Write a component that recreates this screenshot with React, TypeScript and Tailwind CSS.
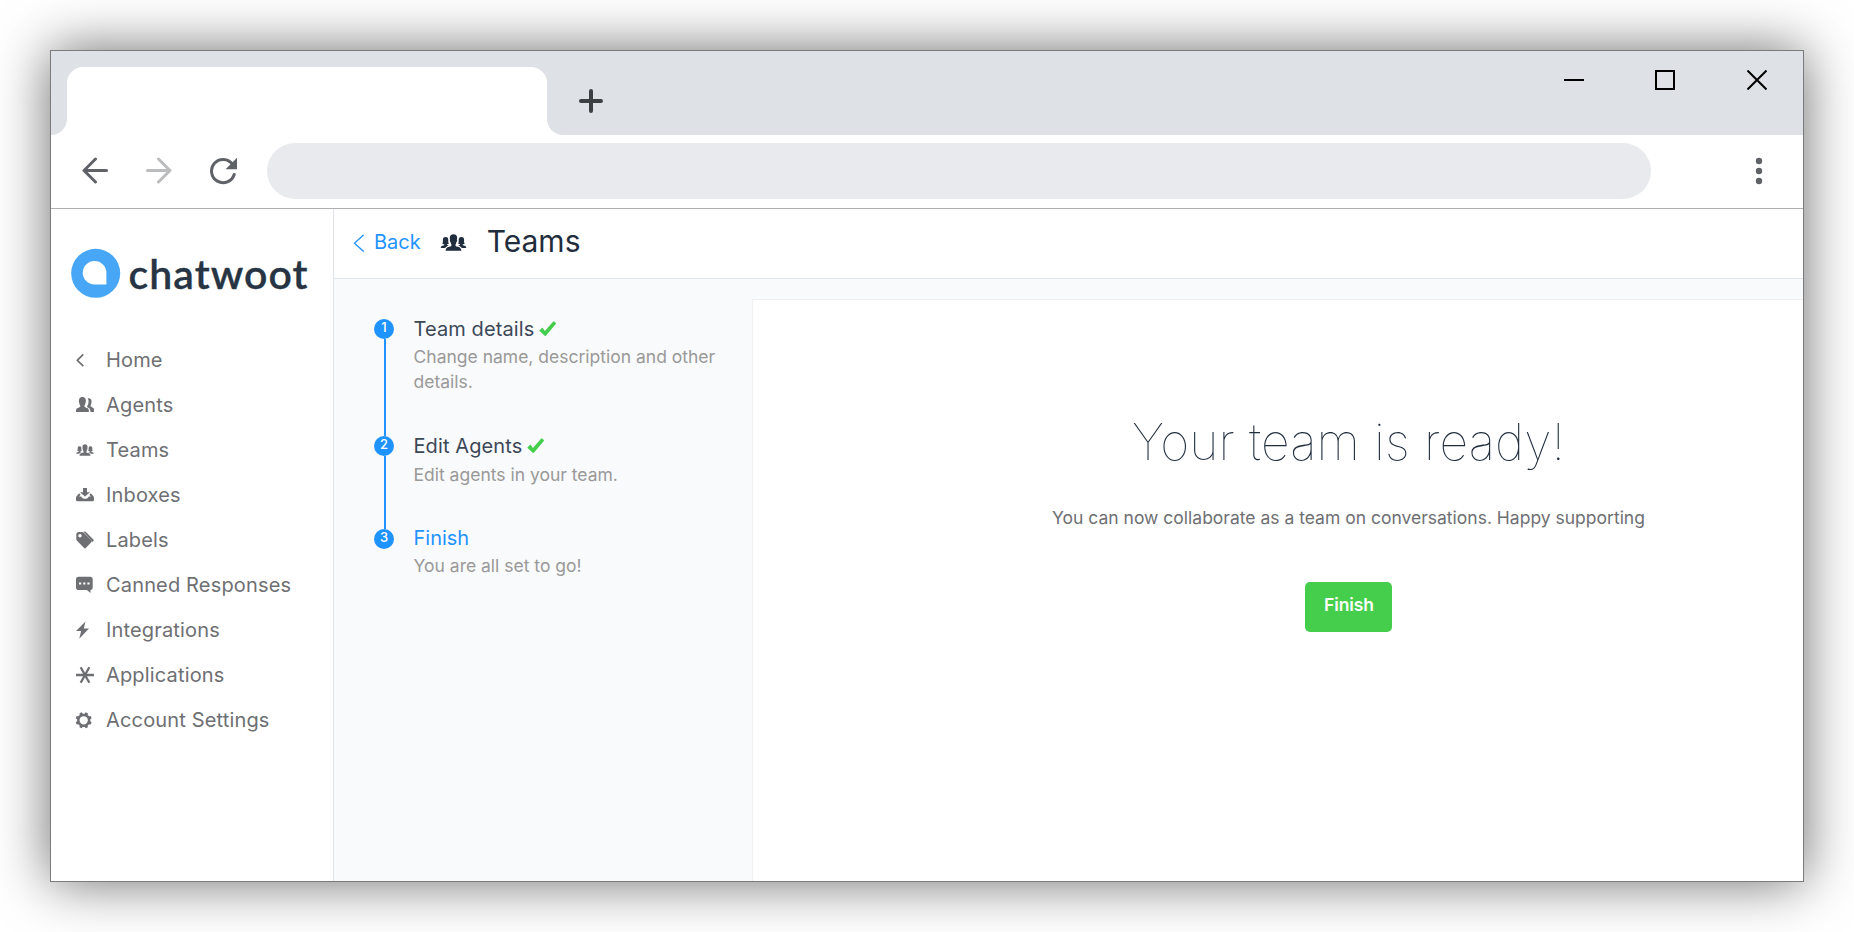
import type { ReactNode } from "react";
import { IoIosPeople } from "react-icons/io";

function NavIcon({ children }: { children: ReactNode }) {
  return (
    <svg className="h-[18px] w-[18px] shrink-0 overflow-visible" viewBox="0 0 18 18" fill="currentColor">
      {children}
    </svg>
  );
}

const Person = () => (
  <NavIcon>
    <path d="M11.7 11.5c-.8-.4-.7-1.3-.2-1.9.6-.8.8-1.6.9-2.5.4-2.1.2-3.6-.8-4.3.6-.5 1.3-.6 2-.4 1.600.3 2.200 1.700 1.900 3.900 0 1-.3 2-.8 2.700-.3.500-.2 1.100.1 1.400.7.7 2.300 1 2.900 2 .3.600.3 1.900.3 3.600h-3.500c-.1-3-.7-3.700-2.800-4.500z" />
    <path d="M0 16c0-2.200.1-3.200 1.100-3.700 1.200-.6 2.800-.8 3.200-1.800.2-.6-.1-1.200-.5-1.800-.5-.9-.7-1.700-.8-2.600C2.600 3.200 3.600 1 6.400 1s3.800 2.200 3.400 5.100c-.1.900-.4 1.800-.9 2.600-.4.600-.7 1.200-.5 1.800.4 1 2 1.200 3.300 1.800 1 .5 1.200 1.500 1.200 3.700z" />
  </NavIcon>
);
const Inbox = () => (
  <NavIcon>
    <path d="M7 2h4v4.200h3L9 10.600 4 6.200h3z" />
    <path d="M3.100 7.300 1 9.800c-.7.800-1 1.400-1 2.300v2c0 .7.500 1.100 1.100 1.100h15.800c.6 0 1.100-.4 1.100-1.100v-2c0-.9-.3-1.500-1-2.300l-2.100-2.500-1.500 1.500 1.500 1.700h-2.100c-.6 1.500-2 2.300-3.800 2.300s-3.200-.8-3.800-2.300H3.100l1.500-1.700z" />
  </NavIcon>
);
const Tags = () => (
  <NavIcon>
    <path
      fillRule="evenodd"
      d="M.3 3.800C.3 2 1.200 1 3 1h3.200c.6 0 1 .2 1.400.6l7.900 7.900c.5.500.5 1.100 0 1.600l-5.700 6c-.5.500-1.200.5-1.700 0L.8 9.400c-.4-.4-.5-.8-.5-1.300zM4 3.100a1.700 1.700 0 1 0 0 3.400 1.700 1.700 0 0 0 0-3.400z"
    />
    <path d="M7.400.6h1.300c.5 0 .9.200 1.200.5l7.700 7.700c.3.300.3.700 0 1l-1.100 1.200-.7-1z" />
  </NavIcon>
);
const Chat = () => (
  <NavIcon>
    <path
      fillRule="evenodd"
      d="M2.600.8h11.500c1.600 0 2.600 1 2.600 2.600v8.100c0 1.500-.9 2.500-2.200 2.600V17l-3.600-2.900H2.600C1 14.100 0 13.100 0 11.500V3.400C0 1.800 1 .8 2.600.8zM3 6.400v2.200h2.200V6.400zm4.200 0v2.200h2.200V6.400zm4.200 0v2.200h2.200V6.400z"
    />
  </NavIcon>
);
const Flash = () => (
  <NavIcon>
    <path d="M9.500.6 0 10h5.200L3.200 17.700 13 7.500H7.800z" />
  </NavIcon>
);
const Asterisk = () => (
  <NavIcon>
    <path d="M0 9h18M4.700 1.200l8.600 15.600M13.300 1.200 4.700 16.800" stroke="currentColor" strokeWidth="2.300" />
  </NavIcon>
);
const Gear = () => (
  <NavIcon>
    <g transform="translate(7.700 9.300)">
      <circle r="5.400" fill="none" stroke="currentColor" strokeWidth="2.500" />
      {[22.5, 67.5, 112.5, 157.5, 202.5, 247.5, 292.5, 337.5].map((a) => (
        <path key={a} d="M-1.800-5.700-1.200-8.100h2.400l.6 2.400z" transform={`rotate(${a})`} />
      ))}
    </g>
  </NavIcon>
);
const Chevron = () => (
  <NavIcon>
    <path d="M7.300 3.400 1.300 9.300l6 5.900" fill="none" stroke="currentColor" strokeWidth="1.700" />
  </NavIcon>
);
const TeamsSmall = () => (
  <span className="flex h-[18px] w-[18px] shrink-0 items-center justify-center">
    <IoIosPeople className="size-[20px] shrink-0" />
  </span>
);

const nav = [
  { label: "Home", icon: <Chevron /> },
  { label: "Agents", icon: <Person /> },
  { label: "Teams", icon: <TeamsSmall /> },
  { label: "Inboxes", icon: <Inbox /> },
  { label: "Labels", icon: <Tags /> },
  { label: "Canned Responses", icon: <Chat /> },
  { label: "Integrations", icon: <Flash /> },
  { label: "Applications", icon: <Asterisk /> },
  { label: "Account Settings", icon: <Gear /> },
];

const Check = () => (
  <svg className="mt-[2px] ml-[5px] h-[16px] w-[18px]" viewBox="0 0 18 16" fill="#44ce4b">
    <path d="m.6 9.200 2.300-2.300c.3-.3.600-.2.800.1l2.200 3L14.200.6c.3-.3.600-.3.900 0l1.700 1.500c.3.300.3.500 0 .9L6.900 14.800c-.4.400-.8.400-1.200 0L.6 10c-.3-.3-.3-.5 0-.8z" />
  </svg>
);

const steps = [
  { title: "Team details", body: "Change name, description and other details.", done: true, box: "h-[117px]", titleBox: "", bodyGap: "mt-[5px]" },
  { title: "Edit Agents", body: "Edit agents in your team.", done: true, box: "h-[93px]", titleBox: "", bodyGap: "mt-[6px]" },
  { title: "Finish", body: "You are all set to go!", done: false, box: "h-[93px]", titleBox: "-mt-px", bodyGap: "mt-[5px]" },
];

function TabStrip() {
  return (
    <div className="flex h-[84px] shrink-0 bg-[#dee1e6]">
      <div className="flex w-[16px] items-end bg-white">
        <div className="h-full w-full rounded-br-[16px] bg-[#dee1e6]" />
      </div>
      <div className="mt-[16px] w-[480px] rounded-t-[16px] bg-white" />
      <div className="flex flex-1 bg-white">
        <div className="flex flex-1 justify-between rounded-bl-[16px] bg-[#dee1e6] pt-[19px] pr-[36px] pl-[32px]">
          <svg className="mt-[19px] h-[24px] w-[24px]" viewBox="0 0 24 24" stroke="#3c4043" strokeWidth="4" strokeLinecap="round">
            <path d="M12 2v20M2 12h20" />
          </svg>
          <div className="flex">
            <svg className="mr-[71px] h-[20px] w-[20px]" viewBox="0 0 20 20">
              <path d="M0 9h20v2H0z" />
            </svg>
            <svg className="mr-[72px] h-[20px] w-[20px]" viewBox="0 0 20 20" fill="none" stroke="#000" strokeWidth="2">
              <path d="M1 1h18v18H1z" />
            </svg>
            <svg className="h-[20px] w-[20px]" viewBox="0 0 20 20" stroke="#000" strokeWidth="2">
              <path d="m.5.5 19 19M19.500.5.5 19.500" />
            </svg>
          </div>
        </div>
      </div>
    </div>
  );
}

function Toolbar() {
  return (
    <div className="flex h-[74px] shrink-0 items-center border-b border-[#b0b0b2] bg-white pr-[37px] pb-[1px] pl-[30px]">
      <svg className="h-[28px] w-[27px] text-[#5f6368]" viewBox="0 0 27 28" fill="none" stroke="currentColor" strokeWidth="3" strokeLinecap="round" strokeLinejoin="round">
        <path d="M25.500 13.500H3M14.500 2 3 13.500 14.500 25" />
      </svg>
      <svg className="ml-[37px] h-[28px] w-[27px] text-[#babcbe]" viewBox="0 0 27 28" fill="none" stroke="currentColor" strokeWidth="3" strokeLinecap="round" strokeLinejoin="round">
        <path d="M2.500 13.500H25M13.500 2 25 13.500 13.500 25" />
      </svg>
      <svg className="ml-[37px] h-[28px] w-[28px] text-[#5f6368]" viewBox="0 0 28 28">
        <path d="M23.500 7.200A11.600 11.600 0 1 0 25.200 17.500" fill="none" stroke="currentColor" strokeWidth="3" strokeLinecap="round" />
        <path d="M28 .8v11.400H16.600z" fill="currentColor" />
      </svg>
      <div className="ml-[30px] h-[56px] w-[1384px] rounded-full bg-[#e8eaed]" />
      <svg className="ml-auto h-[28px] w-[14px]" viewBox="0 0 14 28" fill="#5f6368">
        <circle cx="7" cy="4" r="3.200" />
        <circle cx="7" cy="14" r="3.200" />
        <circle cx="7" cy="24" r="3.200" />
      </svg>
    </div>
  );
}

export default function App() {
  return (
    <div className="flex h-[932px] w-[1854px] overflow-hidden bg-white p-[50px] font-['Inter',sans-serif]">
      <div className="flex h-[832px] w-[1754px] flex-col border border-[#7b7b7d] bg-white shadow-[0_0_52px_rgba(0,0,0,0.58)]">
        <TabStrip />
        <Toolbar />
        <div className="flex min-h-0 flex-1">
          <aside className="flex w-[283px] shrink-0 flex-col border-r border-[#e0e3ec] bg-white">
            <div className="flex h-[128px] pt-[39px] pl-[20px]">
              <svg className="h-[50px] w-[240px]" viewBox="0 0 240 50">
                <circle cx="24.700" cy="25.300" r="24.500" fill="#47a7f6" />
                <path d="M23.500 13a11.900 11.900 0 0 1 11.900 11.900v11.600H23.500a11.750 11.750 0 0 1 0-23.500z" fill="#fff" />
                <text x="57.500" y="40.500" className="font-['Lato',sans-serif] text-[41px] font-semibold" stroke="#273444" strokeWidth=".3" textLength="179" fill="#273444">
                  chatwoot
                </text>
              </svg>
            </div>
            <nav className="flex flex-col">
              {nav.map((n) => (
                <div key={n.label} className="flex h-[45px] items-center gap-[12px] pl-[25px] text-[20px] tracking-[0.16px] whitespace-nowrap text-[#6e6f73]">
                  {n.icon}
                  <span>{n.label}</span>
                </div>
              ))}
            </nav>
          </aside>
          <main className="flex min-w-0 flex-1 flex-col bg-[#f9fafc]">
            <header className="flex h-[70px] shrink-0 items-center border-b border-[#e0e6ed] bg-white pb-[4px] pl-[19px]">
              <svg className="mt-[3px] h-[18px] w-[12px]" viewBox="0 0 12 18" fill="none" stroke="#1f93ff" strokeWidth="1.300">
                <path d="M10.700.700 1.500 9.200l9.200 8.400" />
              </svg>
              <span className="ml-[9px] text-[20px] text-[#1f93ff]">Back</span>
              <IoIosPeople className="mt-px ml-[18px] size-[29px] text-[#1f2d3d]" />
              <h1 className="-mt-[2px] ml-[19px] text-[30px] leading-[36px] text-[#1f2d3d]">Teams</h1>
            </header>
            <div className="flex min-h-0 flex-1">
              <ol className="flex w-[418px] shrink-0 flex-col pt-[40px] pl-[40px]">
                {steps.map((s, i) => (
                  <li key={s.title} className={`flex ${s.box}`}>
                    <div className="flex w-[20px] flex-col items-center">
                      <div className="flex h-[20px] w-[20px] shrink-0 justify-center rounded-full bg-[#1f93ff] text-[13px] leading-[17px] font-medium text-white">
                        {i + 1}
                      </div>
                      {i < 2 && <div className="ml-[2px] w-[2px] flex-1 bg-[#1f93ff]" />}
                    </div>
                    <div className={`ml-[19.5px] w-[310px] ${s.titleBox}`}>
                      <div className={i === 2 ? "flex text-[20px] leading-[20px] text-[#1f93ff]" : "flex text-[20px] leading-[20px] tracking-[0.1px] text-[#3c4858]"}>
                        {s.title}
                        {s.done && <Check />}
                      </div>
                      <p className={`text-[17.5px] leading-[25px] text-[#999999] ${s.bodyGap}`}>{s.body}</p>
                    </div>
                  </li>
                ))}
              </ol>
              <section className="mt-[20px] flex min-w-0 flex-1 flex-col items-center border-t border-l border-[#edf1f4] bg-white pt-[110px] pl-[141px]">
                <h2 className="text-[50px] leading-[64px] font-thin tracking-[0.1px] whitespace-nowrap text-[#1f2d3d]">Your team is ready!</h2>
                <p className="mt-[31px] text-[17.5px] leading-[26px] whitespace-nowrap text-[#6e6f73]">
                  You can now collaborate as a team on conversations. Happy supporting
                </p>
                <button className="mt-[51px] flex h-[50px] w-[87px] justify-center rounded-[5px] bg-[#44ce4b] pt-[11px] pl-px text-[17.5px] leading-[24px] font-semibold tracking-[-0.1px] text-white">
                  Finish
                </button>
              </section>
            </div>
          </main>
        </div>
      </div>
    </div>
  );
}
